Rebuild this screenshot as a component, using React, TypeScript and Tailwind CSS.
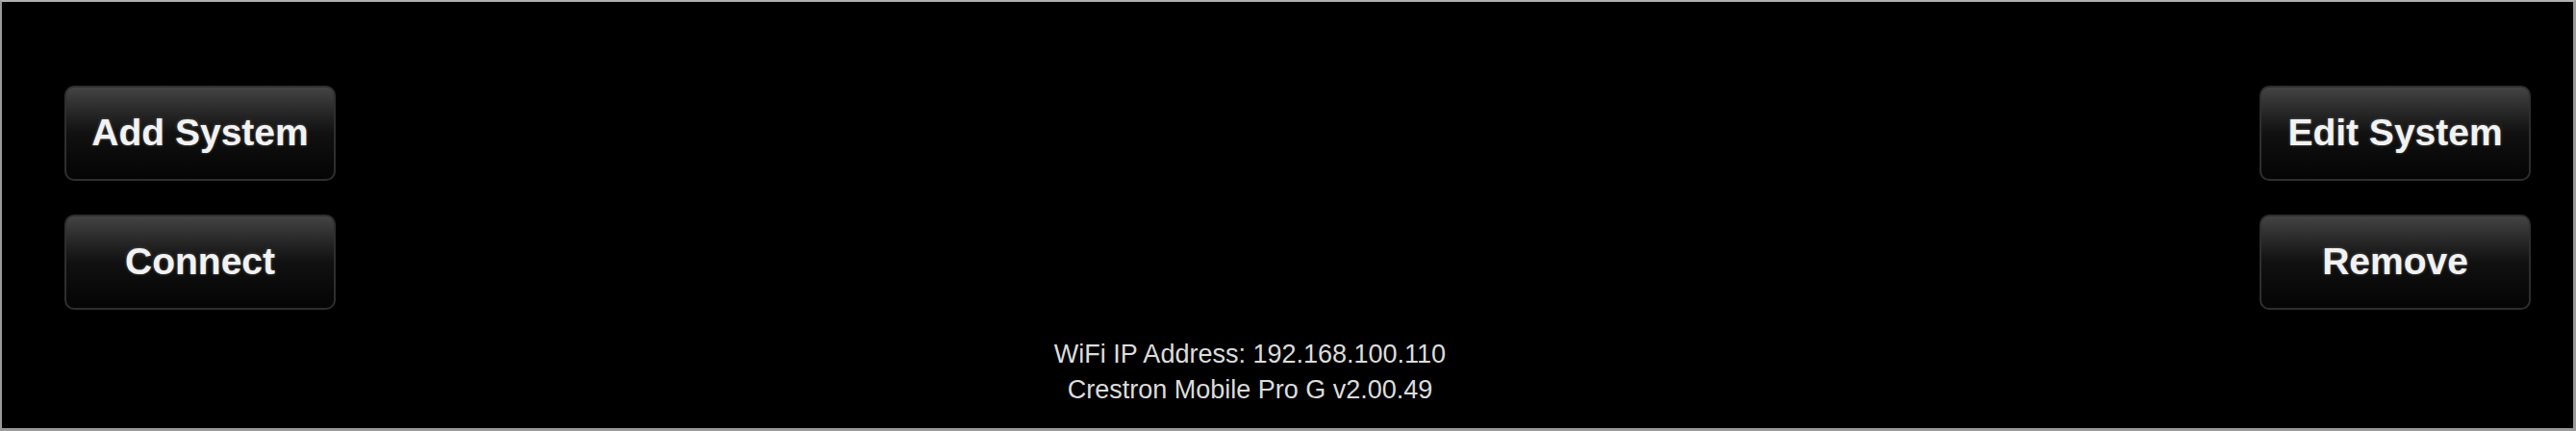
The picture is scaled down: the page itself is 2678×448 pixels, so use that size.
import React from 'react';

const BUTTON =
  'flex h-[99px] w-[282px] items-center justify-center rounded-[10px] border-2 border-[#2e2e2e] bg-gradient-to-b from-[#444444] via-[#111111] via-50% to-[#050505] text-[39px] font-bold text-[#f2f2f2] [text-shadow:0_0_3px_rgba(255,255,255,0.35)]';

export default function App() {
  return (
    <div
      className="flex h-[448px] w-[2678px] flex-col border-2 border-b-[3px] border-r-[3px] border-[#9a9a9a] border-t-[#b0b0b0] bg-black"
      style={{ fontFamily: '"Liberation Sans", Arial, Helvetica, sans-serif' }}
    >
      {/* Button columns */}
      <div className="flex justify-between pl-[65px] pr-[44px] pt-[87px]">
        <div className="flex flex-col gap-[35px]">
          <button className={BUTTON}>Add System</button>
          <button className={BUTTON}>Connect</button>
        </div>
        <div className="flex flex-col gap-[35px]">
          <button className={BUTTON}>Edit System</button>
          <button className={BUTTON}>Remove</button>
        </div>
      </div>

      {/* Footer info */}
      <div className="mt-[28px] pr-[78px] text-center text-[27px] leading-[37px] text-[#dcdcdc]">
        <div>WiFi IP Address: 192.168.100.110</div>
        <div>Crestron Mobile Pro G v2.00.49</div>
      </div>
    </div>
  );
}
